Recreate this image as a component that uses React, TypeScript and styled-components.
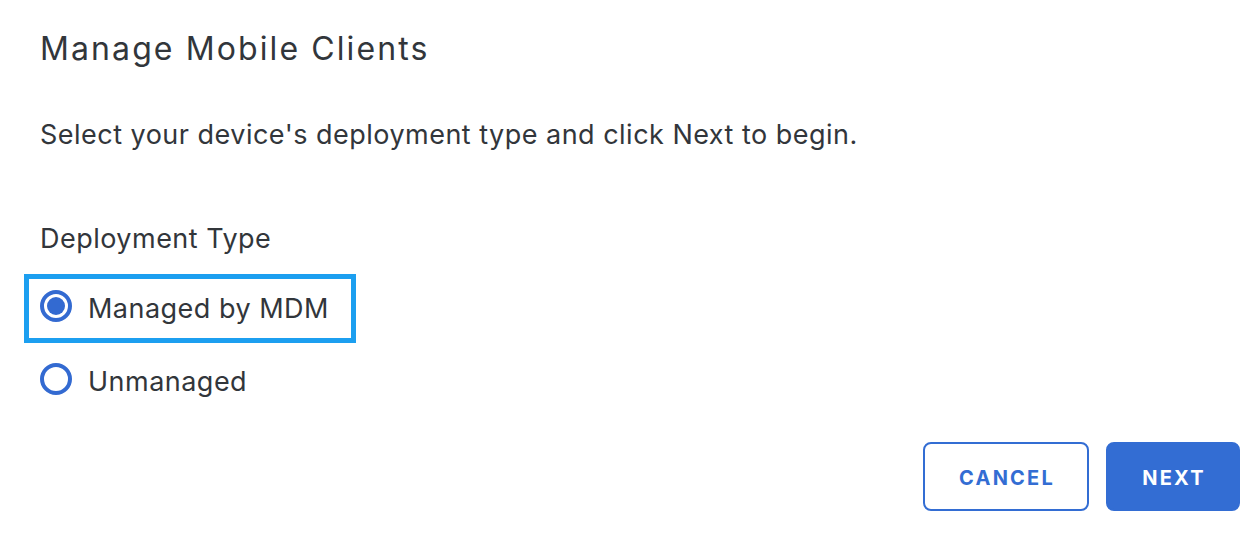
import React, { useState } from "react";
import styled, { createGlobalStyle } from "styled-components";

const Global = createGlobalStyle`
  html, body { margin: 0; padding: 0; background: #ffffff; }
  body { font-family: Inter, "Noto Sans", "Liberation Sans", sans-serif; color: #32363b; }
  * { box-sizing: border-box; }
`;

const Dialog = styled.div`
  width: 1254px;
  height: 536px;
  padding: 29px 14px 0 40px;
  display: flex;
  flex-direction: column;
`;

const Title = styled.h1`
  margin: 0;
  font-size: 32px;
  line-height: 40px;
  font-weight: 400;
  letter-spacing: 2.1px;
  color: #32363b;
`;

const Intro = styled.p`
  margin: 50px 0 0;
  font-size: 27px;
  line-height: 32px;
  letter-spacing: 0.48px;
  color: #32363b;
`;

const GroupLabel = styled.div`
  margin-top: 72px;
  font-size: 27px;
  line-height: 32px;
  letter-spacing: 0.48px;
  color: #32363b;
`;

const RadioList = styled.div`
  margin: 19px 0 0 -16px;
  display: flex;
  flex-direction: column;
  align-items: flex-start;
  gap: 4px;
`;

const Option = styled.label<{ $focused: boolean }>`
  display: flex;
  align-items: center;
  gap: 16px;
  height: 69px;
  padding: 0 22px 0 11px;
  border: 5px solid ${(p) => (p.$focused ? "#1c9ff0" : "transparent")};
  cursor: pointer;
  font-size: 27px;
  line-height: 32px;
  letter-spacing: 0.48px;
  color: #32363b;
`;

const Circle = styled.span<{ $checked: boolean }>`
  width: 32px;
  height: 32px;
  margin-top: -6px;
  border-radius: 50%;
  border: 4px solid #336ad1;
  display: flex;
  align-items: center;
  justify-content: center;
  flex-shrink: 0;
  &::after {
    content: "";
    width: 18px;
    height: 18px;
    border-radius: 50%;
    background: #336ad1;
    display: ${(p) => (p.$checked ? "block" : "none")};
  }
`;

const Actions = styled.div`
  margin-top: 26px;
  display: flex;
  justify-content: flex-end;
  gap: 17px;
`;

const Button = styled.button<{ $primary?: boolean; $width: number }>`
  width: ${(p) => p.$width}px;
  height: 69px;
  padding: 2px 0 0 2px;
  border-radius: 8px;
  border: 2px solid #336dd3;
  background: ${(p) => (p.$primary ? "#336dd3" : "#ffffff")};
  color: ${(p) => (p.$primary ? "#ffffff" : "#336dd3")};
  font-family: Inter, "Liberation Sans", sans-serif;
  font-size: 20px;
  font-weight: 700;
  letter-spacing: 2.2px;
  cursor: pointer;
`;

export default function App() {
  const [value, setValue] = useState("mdm");
  const options = [
    { id: "mdm", label: "Managed by MDM" },
    { id: "unmanaged", label: "Unmanaged" },
  ];
  return (
    <>
      <Global />
      <Dialog>
        <Title>Manage Mobile Clients</Title>
        <Intro>Select your device's deployment type and click Next to begin.</Intro>
        <GroupLabel>Deployment Type</GroupLabel>
        <RadioList>
          {options.map((o) => (
            <Option key={o.id} $focused={o.id === "mdm"} onClick={() => setValue(o.id)}>
              <Circle $checked={value === o.id} />
              {o.label}
            </Option>
          ))}
        </RadioList>
        <Actions>
          <Button $width={166}>CANCEL</Button>
          <Button $primary $width={134}>NEXT</Button>
        </Actions>
      </Dialog>
    </>
  );
}
